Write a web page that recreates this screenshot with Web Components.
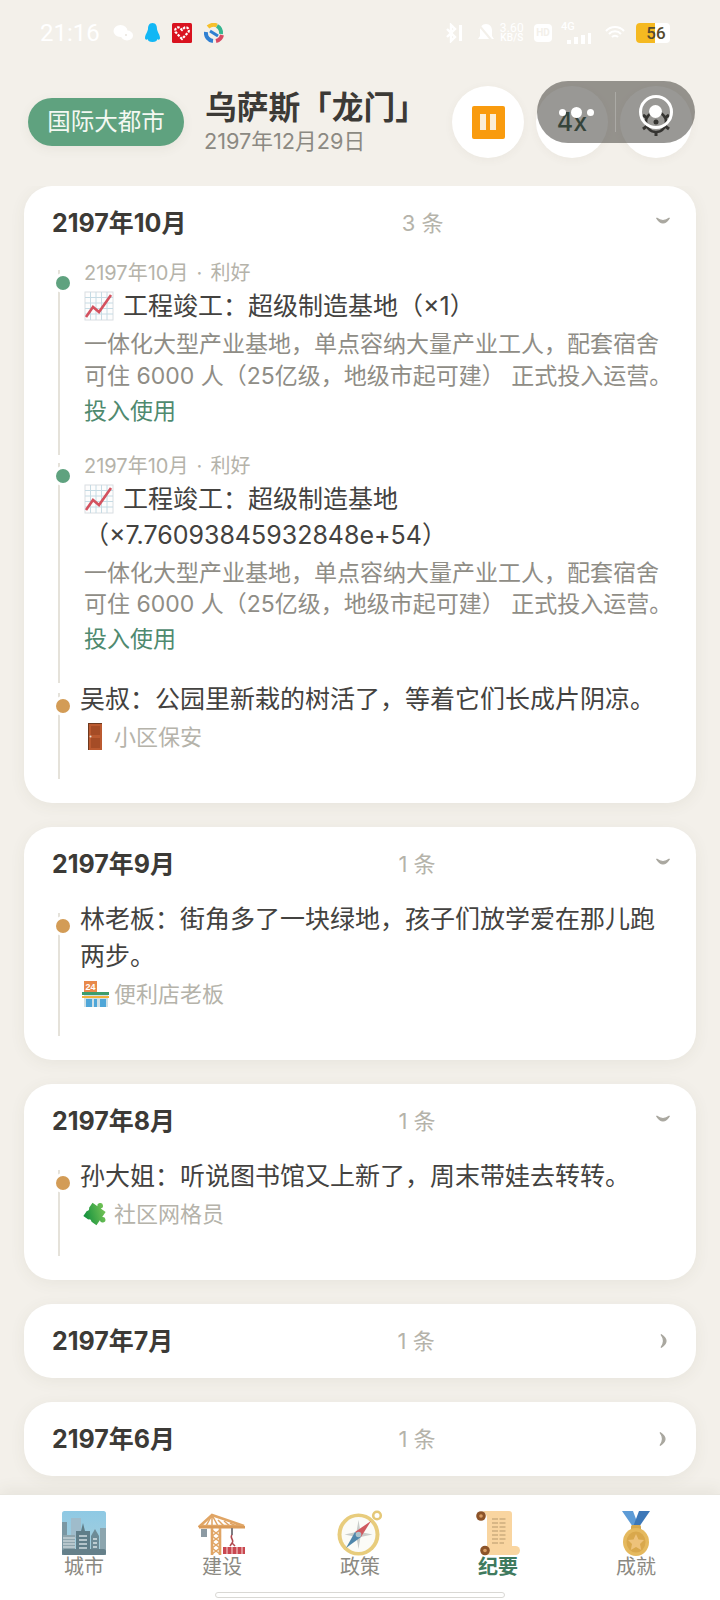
<!DOCTYPE html>
<html lang="zh">
<head>
<meta charset="utf-8">
<title>纪要</title>
<style>
html, body { margin: 0; padding: 0; }
body {
	width: 720px;
	height: 1600px;
	overflow: hidden;
	background: #f3f0ea;
	font-family: Inter, "Noto Sans CJK SC", "Noto Sans", sans-serif;
	text-spacing-trim: space-all;
}
</style>
</head>
<body>
<app-page>
	<status-bar></status-bar>
	<city-header></city-header>
	<float-capsule></float-capsule>
	<month-list>
		<month-card month="2197年10月" count="3 条" open>
			<event-item meta="2197年10月 · 利好" heading="工程竣工：超级制造基地（×1）"></event-item>
			<event-item meta="2197年10月 · 利好" heading="工程竣工：超级制造基地（×7.76093845932848e+54）"></event-item>
			<talk-item who="小区保安" icon="door" last>吴叔：公园里新栽的树活了，等着它们长成片阴凉。</talk-item>
		</month-card>
		<month-card month="2197年9月" count="1 条" open>
			<talk-item who="便利店老板" icon="store" last>林老板：街角多了一块绿地，孩子们放学爱在那儿跑两步。</talk-item>
		</month-card>
		<month-card month="2197年8月" count="1 条" open>
			<talk-item who="社区网格员" icon="puzzle" last>孙大姐：听说图书馆又上新了，周末带娃去转转。</talk-item>
		</month-card>
		<month-card month="2197年7月" count="1 条"></month-card>
		<month-card month="2197年6月" count="1 条"></month-card>
	</month-list>
	<tab-bar>
		<tab-item icon="city">城市</tab-item>
		<tab-item icon="crane">建设</tab-item>
		<tab-item icon="compass">政策</tab-item>
		<tab-item icon="scroll" active>纪要</tab-item>
		<tab-item icon="medal">成就</tab-item>
	</tab-bar>
</app-page>

<script>
const icons = {
	chart: `<svg viewBox="0 0 30 30" width="30" height="30">
		<rect x="1" y="1" width="28" height="28" fill="#fdfdfd" stroke="#d9dee2"/>
		<path d="M1 6.500h28M1 12h28M1 17.500h28M1 23h28M6.500 1v28M12 1v28M17.500 1v28M23 1v28" stroke="#c6dbe4" stroke-width="1" fill="none"/>
		<path d="M2 26L9 16l6 5L27 4" stroke="#d4525f" stroke-width="2.600" fill="none"/>
	</svg>`,
	door: `<svg viewBox="0 0 30 30" width="30" height="30">
		<rect x="8" y="1" width="14" height="27" fill="#6d3a20"/>
		<rect x="9" y="2" width="13" height="26" fill="#bb5a30"/>
		<rect x="11" y="4" width="9" height="9" fill="#a54c26"/>
		<rect x="11" y="16" width="9" height="10" fill="#a54c26"/>
		<circle cx="10.500" cy="14.500" r="1" fill="#e8e0d0"/>
	</svg>`,
	store: `<svg viewBox="0 0 30 30" width="30" height="30">
		<rect x="4" y="2" width="13" height="11" fill="#e8894a"/>
		<text x="10.500" y="11" font-size="9" font-weight="700" text-anchor="middle" fill="#fff" font-family="Liberation Sans">24</text>
		<rect x="4" y="13" width="24" height="15" fill="#cfe0e6"/>
		<rect x="2" y="13" width="27" height="3" fill="#3d9d6b"/>
		<rect x="2" y="17" width="27" height="2" fill="#f2b13c"/>
		<rect x="6" y="20" width="6" height="8" fill="#4fa6d8"/>
		<rect x="14" y="20" width="3" height="8" fill="#4fa6d8"/>
		<rect x="20" y="20" width="6" height="8" fill="#4fa6d8"/>
	</svg>`,
	puzzle: `<svg viewBox="0 0 30 30" width="30" height="30">
		<defs><linearGradient id="piece" x1="0.900" y1="0" x2="0.100" y2="1"><stop offset="0" stop-color="#8ccf5c"/><stop offset="1" stop-color="#16923e"/></linearGradient></defs>
		<path transform="translate(-0.500 -2) rotate(35 15 17)" d="M7 9H13a2.800 2.800 0 1 1 4 0H23V15a2.800 2.800 0 1 1 0 4V25H17a2.800 2.800 0 0 0-4 0H7V19a2.800 2.800 0 0 0 0-4z" fill="url(#piece)"/>
	</svg>`,
	city: `<svg viewBox="0 0 44 44" width="44" height="44">
		<defs><linearGradient id="sky" x1="0" y1="0" x2="0" y2="1"><stop offset="0" stop-color="#8ec9e4"/><stop offset="1" stop-color="#a9cfdb"/></linearGradient></defs>
		<rect width="44" height="44" rx="2.500" fill="url(#sky)"/>
		<path d="M9 7h10v20H9z" fill="#9fbccb"/>
		<rect x="0" y="11" width="5" height="33" fill="#7a97a3"/>
		<rect x="1" y="24" width="12" height="20" fill="#8fa5ad"/>
		<path d="M1 27h12M1 30h12M1 33h12M1 36h12M1 39h12" stroke="#dfe7ea" stroke-width="1"/>
		<path d="M14 20h5l2-8 2 8h5v24H14z" fill="#5f7d88"/>
		<path d="M17 25h8M17 29h8M17 33h8M17 37h8" stroke="#cfdade" stroke-width="1.300"/>
		<path d="M29 25l4-7 4 7v19h-8z" fill="#6d8b96"/>
		<path d="M31 28h4M31 32h4M31 36h4" stroke="#d8e2e5" stroke-width="1.300"/>
		<rect x="38" y="17" width="6" height="27" fill="#8ca5ae"/>
		<rect y="38" width="44" height="6" rx="2.500" fill="#65808a"/>
	</svg>`,
	crane: `<svg viewBox="0 0 48 44" width="48" height="44">
		<path d="M2 15L14 4 46 15z" fill="none" stroke="#e0a565" stroke-width="2.600"/>
		<path d="M14 4v11M8 15l6-11M20 15l-6-11M26 15l-6-6M32 15l-6-5M38 15l-6-3" stroke="#e0a565" stroke-width="1.500" fill="none"/>
		<rect x="1" y="15" width="46" height="2.500" fill="#d99a58"/>
		<rect x="3" y="18" width="6" height="8" fill="#8c9aa3"/>
		<path d="M14 17v27M22 17v27" stroke="#e0a565" stroke-width="2.600"/>
		<path d="M14 19l8 6-8 6 8 6-8 6M22 19l-8 6 8 6-8 6 8 6" stroke="#e0a565" stroke-width="1.500" fill="none"/>
		<path d="M34 17v7" stroke="#7d7d82" stroke-width="2"/>
		<path d="M34 24c-3 3 3 5 0 8l-2 3M34 32l3 3" stroke="#b04a50" stroke-width="1.500" fill="none"/>
		<rect x="25" y="36" width="22" height="7" fill="#c9474f"/>
		<path d="M29 36v7M34 36v7M39 36v7M44 36v7" stroke="#f0c5c5" stroke-width="1.200"/>
	</svg>`,
	compass: `<svg viewBox="0 0 46 46" width="46" height="46">
		<circle cx="40" cy="5.500" r="3.800" fill="none" stroke="#e5c878" stroke-width="2.600"/>
		<ellipse cx="21.500" cy="24.500" rx="21" ry="21" fill="#e8cc7c"/>
		<ellipse cx="21.500" cy="24.500" rx="17" ry="17.500" fill="#fbfbf7"/>
		<path d="M21.500 10l2 12 12 2.500-12 2.500-2 12-2-12-12-2.500 12-2.500z" fill="#c9ccc9"/>
		<path d="M34 11L24 27l-6-5z" fill="#cf5a5f"/>
		<path d="M9 38l9-16 6 5z" fill="#4f86ab"/>
		<circle cx="21.500" cy="24.500" r="2.800" fill="#aac3cc"/>
	</svg>`,
	scroll: `<svg viewBox="0 0 46 46" width="46" height="46">
		<path d="M6 1h28c2 0 3 1 3 3v34H12V8c0-2-2-7-6-7z" fill="#f9d5a0"/>
		<rect x="7" y="36" width="38" height="9" rx="4.500" fill="#f9d5a0"/>
		<path d="M17 9h15M17 13h15M17 17h15M17 21h15M17 25h15M17 29h15M17 33h12" stroke="#b79a6c" stroke-width="1.100" stroke-dasharray="6 1.500"/>
		<circle cx="6" cy="6" r="4.800" fill="#8c5328"/><circle cx="6" cy="6" r="1.800" fill="#d79c63"/>
		<circle cx="10" cy="40.500" r="4.800" fill="#8c5328"/><circle cx="10" cy="40.500" r="1.800" fill="#d79c63"/>
	</svg>`,
	medal: `<svg viewBox="0 0 30 46" width="30" height="46">
		<path d="M1 1h11l6 16h-6z" fill="#5d9bd6"/>
		<path d="M29 1H18l-6 16h6z" fill="#3d78b8"/>
		<rect x="10" y="15" width="10" height="5" rx="1.500" fill="#d6a94e"/>
		<ellipse cx="15" cy="32" rx="13" ry="14" fill="#e5b95e"/>
		<ellipse cx="15" cy="32" rx="9.500" ry="10.500" fill="#d9a84c"/>
		<path d="M15 24l2.500 5.500 5.500.5-4 4 1.200 6-5.200-3-5.200 3 1.200-6-4-4 5.500-.5z" fill="#eec27a"/>
	</svg>`
};

class AppPage extends HTMLElement {
	constructor() {
		super();
		this.attachShadow({ mode: 'open' });
		this.shadowRoot.innerHTML = `
		<style>
		:host {
			display: flex;
			flex-direction: column;
			position: relative;
			width: 720px;
			height: 1600px;
			overflow: hidden;
		}
		</style>
		<slot></slot>
		`;
	}
}

class StatusBar extends HTMLElement {
	constructor() {
		super();
		this.attachShadow({ mode: 'open' });
		this.shadowRoot.innerHTML = `
		<style>
		:host {
			display: flex;
			align-items: center;
			height: 68px;
			padding: 0 50px 2px 40px;
			margin-bottom: 18px;
			box-sizing: border-box;
			color: #fff;
		}
		.time {
			font: 400 24px/1 Roboto, sans-serif;
			width: 73px;
		}
		.left { display: flex; align-items: center; gap: 12px; }
		.right { display: flex; align-items: center; margin-left: auto; }
		.speed { font: 500 10px/10px Roboto, sans-serif; text-align: center; margin: 0 10px 0 3px; letter-spacing: .2px; }
		.speed b { display: block; font-size: 12px; font-weight: 400; }
		.hd { background: #fff; color: #f3f0ea; border-radius: 4px; width: 18px; height: 18px; font: 700 10px/18px Roboto, sans-serif; text-align: center; margin-right: 9px; }
		.net { font: 500 11px/10px Roboto, sans-serif; width: 31px; height: 22px; position: relative; margin-right: 13px; }
		.net svg { position: absolute; left: 6px; bottom: 0; }
		.battery { position: relative; width: 34px; height: 20px; border-radius: 4px; background: #fff; margin-left: 11px; overflow: hidden; }
		.battery i { position: absolute; left: 0; top: 0; bottom: 0; width: 19px; background: #f5b921; }
		.battery span { position: absolute; left: 6px; right: 0; top: 0; font: 500 17px/20px Roboto, sans-serif; color: #554a2e; text-align: center; }
		</style>
		<span class="time">21:16</span>
		<div class="left">
			<svg width="20" height="16" viewBox="0 0 20 16"><ellipse cx="7.500" cy="6" rx="7" ry="6" fill="#fff"/><ellipse cx="14" cy="10.500" rx="6" ry="5" fill="#fff"/><circle cx="13" cy="10" r="1" fill="#e8e5de"/></svg>
			<svg width="15" height="20" viewBox="0 0 15 20"><path d="M7.500 0C4 0 3 3 3 6c0 2-3 6-3 9 0 2 2 2 2.500 1 .5 2 2 3 5 3s4.500-1 5-3c.5 1 2.500 1 2.500-1 0-3-3-7-3-9 0-3-1-6-4.500-6z" fill="#12b7f5"/></svg>
			<svg width="20" height="20" viewBox="0 0 20 20"><rect width="20" height="20" rx="1.500" fill="#d9121f"/><path d="M10 16L3.500 9C2 6 5.500 3 8 5l2 2 2-2c2.500-2 6 1 4.500 4z" fill="none" stroke="#fff" stroke-width="2.200" stroke-dasharray="2.500 1.200"/></svg>
			<svg width="20" height="20" viewBox="0 0 20 20" fill="none" stroke-width="4"><path d="M4 4a9 9 0 0 1 9-1.500" stroke="#f6c02c"/><path d="M13 3a8 8 0 0 1 4 8" stroke="#35b58f"/><path d="M18 12a8 8 0 0 1-6 6" stroke="#d94862"/><path d="M9 18a8 8 0 0 1-7-9" stroke="#2f7fd1"/><path d="M6 8l8 5" stroke="#2f7fd1" stroke-width="3"/></svg>
		</div>
		<div class="right">
			<svg width="22" height="20" viewBox="0 0 22 20" fill="none" stroke="#fff" stroke-width="2.400"><path d="M2 6l8 8-4 4V2l4 4-8 8"/><rect x="14" y="2" width="3" height="16" fill="#fff" stroke="none"/></svg>
			<svg width="22" height="20" viewBox="0 0 22 20" style="margin-left:8px"><path d="M11 1c-4 0-6 3-6 7v5l-2 3h16l-2-3V8c0-4-2-7-6-7z" fill="#fff"/><path d="M3 1l15 18" stroke="#f3f0ea" stroke-width="2"/></svg>
			<div class="speed"><b>3.60</b>KB/S</div>
			<div class="hd">HD</div>
			<div class="net">4G<svg width="24" height="11" viewBox="0 0 24 11" fill="#fff"><rect x="0" y="7" width="4" height="4"/><rect x="7" y="4" width="4" height="7"/><rect x="14" y="2" width="4" height="9"/><rect x="21" y="0" width="3" height="11"/></svg></div>
			<svg width="20" height="16" viewBox="0 0 20 16" fill="none" stroke="#fff" stroke-width="2"><path d="M1 6a12 12 0 0 1 18 0M4 9a8 8 0 0 1 12 0M7 12a4 4 0 0 1 6 0"/></svg>
			<div class="battery"><i></i><span>56</span></div>
		</div>
		`;
	}
}

class RoundBtn extends HTMLElement {
	constructor() {
		super();
		this.attachShadow({ mode: 'open' });
		this.shadowRoot.innerHTML = `
		<style>
		:host {
			display: flex;
			align-items: center;
			justify-content: center;
			width: 72px;
			height: 72px;
			flex: none;
			border-radius: 50%;
			background: #fff;
			box-shadow: 0 2px 10px rgba(90, 80, 60, 0.05);
		}
		</style>
		<slot></slot>
		`;
	}
}

class CityHeader extends HTMLElement {
	constructor() {
		super();
		this.attachShadow({ mode: 'open' });
		this.shadowRoot.innerHTML = `
		<style>
		:host {
			display: flex;
			align-items: center;
			height: 72px;
			padding: 0 28px;
			margin-bottom: 28px;
		}
		.chip {
			width: 156px;
			height: 48px;
			border-radius: 24px;
			background: #5fa27f;
			color: #f4f8f2;
			font-size: 23.500px;
			line-height: 47px;
			text-align: center;
			flex: none;
			box-shadow: 0 3px 12px rgba(90, 80, 60, 0.07);
		}
		.names { margin: 0 0 4px 21px; flex: 1; }
		h1 {
			margin: 0;
			font-size: 31.700px;
			line-height: 40px;
			font-weight: 700;
			color: #3c3a36;
			white-space: nowrap;
		}
		.date { font-size: 21.700px; line-height: 24px; color: #8b8982; margin-left: -1px; margin-top: 1px; }
		.btns { display: flex; gap: 12px; }
		.pause {
			display: flex;
			justify-content: center;
			align-items: center;
			gap: 4px;
			width: 33px;
			height: 33px;
			border-radius: 2px;
			background: #f99b0e;
		}
		.pause i { display: block; width: 6px; height: 16px; background: #fbeed6; }
		.speed { font-size: 25px; font-weight: 500; line-height: 1; color: #12382a; }
		</style>
		<div class="chip">国际大都市</div>
		<div class="names">
			<h1>乌萨斯「龙门」</h1>
			<div class="date">2197年12月29日</div>
		</div>
		<div class="btns">
			<round-btn><div class="pause"><i></i><i></i></div></round-btn>
			<round-btn><span class="speed">4x</span></round-btn>
			<round-btn>
				<svg width="32" height="32" viewBox="0 0 32 32" fill="none" stroke="#111">
					<circle cx="16" cy="16" r="10" stroke-width="2.600"/>
					<circle cx="16" cy="16" r="2.500" fill="#111" stroke="none"/>
					<path d="M16 2v5M16 25v5M3 9l4 3M29 9l-4 3M3 23l4-3M29 23l-4-3" stroke-width="3"/>
				</svg>
			</round-btn>
		</div>
		`;
	}
}

class FloatCapsule extends HTMLElement {
	constructor() {
		super();
		this.attachShadow({ mode: 'open' });
		this.shadowRoot.innerHTML = `
		<style>
		:host {
			position: absolute;
			left: 537px;
			top: 81px;
			width: 158px;
			height: 62px;
			border-radius: 31px;
			background: rgba(80, 78, 72, 0.58);
			display: flex;
			align-items: center;
		}
		.side { flex: 1; display: flex; justify-content: center; align-items: center; }
		.line { width: 1px; height: 40px; background: rgba(255, 255, 255, 0.22); margin-left: -1px; }
		.dots { display: flex; align-items: center; gap: 5px; margin-top: 1px; }
		.dots i { display: block; width: 7px; height: 7px; border-radius: 50%; background: #fff; }
		.dots i:nth-child(2) { width: 11px; height: 11px; }
		.ring { width: 28px; height: 28px; border: 3px solid #fff; border-radius: 50%; display: flex; align-items: center; justify-content: center; }
		.ring i { display: block; width: 13px; height: 13px; border-radius: 50%; background: #fff; margin-bottom: 2px; }
		</style>
		<div class="side"><div class="dots"><i></i><i></i><i></i></div></div>
		<div class="line"></div>
		<div class="side"><div class="ring"><i></i></div></div>
		`;
	}
}

class MonthList extends HTMLElement {
	constructor() {
		super();
		this.attachShadow({ mode: 'open' });
		this.shadowRoot.innerHTML = `
		<style>
		:host {
			display: flex;
			flex-direction: column;
			gap: 24px;
			flex: 1;
			padding: 0 24px;
			overflow: hidden;
		}
		</style>
		<slot></slot>
		`;
	}
}

class MonthCard extends HTMLElement {
	constructor() {
		super();
		this.attachShadow({ mode: 'open' });
		const open = this.hasAttribute('open');
		this.shadowRoot.innerHTML = `
		<style>
		:host {
			display: block;
			flex: none;
			background: #fff;
			border-radius: 28px;
			box-shadow: 0 3px 16px rgba(90, 80, 60, 0.07);
			padding: 0 28px;
		}
		.head {
			display: flex;
			align-items: center;
			justify-content: space-between;
			height: 74px;
			padding-bottom: 5px;
			box-sizing: border-box;
		}
		h2 {
			margin: 0;
			font-size: 25px;
			font-weight: 700;
			color: #3c3a36;
		}
		.count { font-size: 22px; color: #b5b3aa; }
		.chev { width: 9px; display: flex; justify-content: center; margin-top: ${open ? 1 : 4}px; }
		.chev svg { flex: none; transform: rotate(${open ? 0 : -90}deg); }
		.body { display: ${open ? 'block' : 'none'}; padding-bottom: 24px; margin-left: 6px; margin-top: -2px; }
		</style>
		<div class="head">
			<h2>${this.getAttribute('month')}</h2>
			<span class="count">${this.getAttribute('count')}</span>
			<span class="chev"><svg width="14" height="14" viewBox="0 0 14 14"><path d="M0.500 4Q7 9 13.500 4Q7 14 0.500 4z" fill="#a9a79f" stroke="#a9a79f" stroke-width="1.200"/></svg></span>
		</div>
		<div class="body"><slot></slot></div>
		`;
	}
}

const itemStyle = `
	:host {
		display: block;
		position: relative;
		font-size: 25px;
		line-height: 36px;
		color: #434240;
	}
	:host::before {
		content: "";
		position: absolute;
		left: 0;
		top: 12px;
		bottom: -4px;
		width: 2px;
		background: #e5e2da;
	}
	:host([last])::before { bottom: 0; }
	.dot {
		position: absolute;
		left: -2px;
		top: 18px;
		width: 14px;
		height: 14px;
		border-radius: 50%;
		box-shadow: 0 0 0 3px #fff;
	}
`;

class EventItem extends HTMLElement {
	constructor() {
		super();
		this.attachShadow({ mode: 'open' });
		this.shadowRoot.innerHTML = `
		<style>
		${itemStyle}
		:host { padding: 0 0 25px 26px; }
		.dot { background: #5fa27f; }
		.meta { font-size: 20px; line-height: 28px; color: #b5b3aa; word-spacing: 2.500px; padding-top: 1px; margin-bottom: -1px; }
		.title { margin-top: 2px; }
		.title svg { vertical-align: -6px; margin-right: 9px; }
		.desc { font-size: 23px; line-height: 31.500px; color: #8f8d86; margin-top: 5px; white-space: nowrap; }
		.act { font-size: 23px; line-height: 30px; color: #4f8a6f; margin-top: 3.500px; }
		</style>
		<span class="dot"></span>
		<div class="meta">${this.getAttribute('meta')}</div>
		<div class="title">${icons.chart}${this.getAttribute('heading')}</div>
		<div class="desc">一体化大型产业基地，单点容纳大量产业工人，配套宿舍<br>可住 6000 人（25亿级，地级市起可建） 正式投入运营。</div>
		<div class="act">投入使用</div>
		`;
	}
}

class TalkItem extends HTMLElement {
	constructor() {
		super();
		this.attachShadow({ mode: 'open' });
		this.shadowRoot.innerHTML = `
		<style>
		${itemStyle}
		:host { padding: 0 0 27px 22px; margin-top: 2px; line-height: 37px; }
		.dot { background: #d39c56; }
		.who { display: flex; align-items: center; gap: 4px; font-size: 22px; line-height: 30px; color: #b5b3aa; margin-top: 4px; }
		.who svg { flex: none; }
		</style>
		<span class="dot"></span>
		<slot></slot>
		<div class="who">${icons[this.getAttribute('icon')]}<span>${this.getAttribute('who')}</span></div>
		`;
	}
}

class TabBar extends HTMLElement {
	constructor() {
		super();
		this.attachShadow({ mode: 'open' });
		this.shadowRoot.innerHTML = `
		<style>
		:host {
			display: block;
			position: relative;
			flex: none;
			height: 106px;
			background: #fff;
			box-sizing: border-box;
			border-top: 1px solid #e9e7e0;
			box-shadow: 0 -5px 14px rgba(90, 80, 60, 0.07);
		}
		.tabs { display: grid; grid-template-columns: repeat(5, 1fr); padding: 16px 15px 0; }
		.home {
			position: absolute;
			left: 215px;
			bottom: 2px;
			width: 290px;
			height: 6px;
			box-sizing: border-box;
			background: #fff;
			border: 1px solid #d9d8d4;
			border-radius: 3px;
		}
		</style>
		<div class="tabs"><slot></slot></div>
		<div class="home"></div>
		`;
	}
}

class TabItem extends HTMLElement {
	constructor() {
		super();
		this.attachShadow({ mode: 'open' });
		this.shadowRoot.innerHTML = `
		<style>
		:host {
			display: flex;
			flex-direction: column;
			align-items: center;
			font-size: 20px;
			line-height: 24px;
			color: #8b8982;
		}
		:host([active]) { color: #3f7a5e; font-weight: 700; }
		.icon { height: 44px; display: flex; align-items: center; justify-content: center; }
		</style>
		<div class="icon">${icons[this.getAttribute('icon')]}</div>
		<slot></slot>
		`;
	}
}

customElements.define('app-page', AppPage);
customElements.define('status-bar', StatusBar);
customElements.define('round-btn', RoundBtn);
customElements.define('city-header', CityHeader);
customElements.define('float-capsule', FloatCapsule);
customElements.define('month-list', MonthList);
customElements.define('month-card', MonthCard);
customElements.define('event-item', EventItem);
customElements.define('talk-item', TalkItem);
customElements.define('tab-bar', TabBar);
customElements.define('tab-item', TabItem);
</script>
</body>
</html>
